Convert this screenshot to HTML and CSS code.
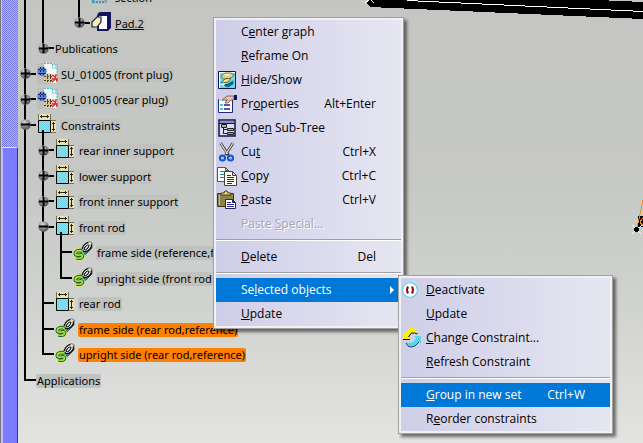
FILE: index.html
```html
<!DOCTYPE html>
<html lang="en">
<head>
<meta charset="utf-8">
<title>Specification tree</title>
<link rel="stylesheet" href="styles.css">
</head>
<body>
<svg class="defs" aria-hidden="true">
  <defs>
    <pattern id="dither" width="2" height="2" patternUnits="userSpaceOnUse"><path fill="#72d6e8" d="M0 0h2v2H0z"/><path fill="#8adfec" d="M0 0h1v1H0zM1 1h1v1H1z"/></pattern>
    <pattern id="haze" width="2" height="2" patternUnits="userSpaceOnUse"><path fill="#b4b6b4" d="M0 0h1v1H0zM1 1h1v1H1z"/></pattern>
    <radialGradient id="ball" cx=".4" cy=".3" r=".75"><stop offset="0" stop-color="#ddd"/><stop offset=".5" stop-color="#8c8c8c"/><stop offset="1" stop-color="#4c4c4c"/></radialGradient>
  </defs>
  <symbol id="plus" viewBox="0 0 11 11"><circle cx="5.5" cy="5.5" r="5.3" fill="url(#ball)"/><path d="M1 4.500h9v2H1zM4.500 1h2v9h-2z"/></symbol>
  <symbol id="minus" viewBox="0 0 11 11"><circle cx="5.5" cy="5.5" r="5.3" fill="url(#ball)"/><path d="M1 4.500h9v2H1z"/></symbol>
  <symbol id="set" viewBox="0 0 20 20">
    <path fill="#e6e2b4" d="M1 0h13v6H1zM14 6h5v13h-5z"/>
    <path fill="url(#dither)" stroke="#000" d="M1.500 6.500h12v12h-12z"/>
    <path fill="none" stroke="#77704c" d="M1.500 0v6M13.500 0v6M14 6.500h5M14 18.500h5"/>
    <path fill="none" stroke="#222" d="M3 2.500h9M4.500 1v3M10.500 1v3M16.500 8v9M15 9.500h3M15 15.500h3"/>
  </symbol>
  <symbol id="link" viewBox="0 0 20 20">
    <path fill="#23868a" stroke="#0c3438" stroke-width=".6" d="M4 10l5-3 6-6 4 1 0 5-6 6-3 2z"/>
    <ellipse cx="14" cy="6" rx="5.400" ry="3.400" transform="rotate(-45 14 6)" fill="#fff" stroke="#000" stroke-width="1.200"/>
    <ellipse cx="13.500" cy="6.500" rx="3" ry="1.300" transform="rotate(-45 13.500 6.500)" fill="none" stroke="#000" stroke-width="1"/>
    <circle cx="16.800" cy="2.600" r="1.900" fill="#ffed68" stroke="#4867c8" stroke-width=".7"/>
    <path fill="none" stroke="#e6f060" stroke-width="5" d="M9.500 10.500c-4-2-8 0-7 3 2 2 6-1 7 1 0 3-3 3-6 2.500"/>
    <path fill="none" stroke="#1f5f2c" stroke-width="3.600" d="M9.500 10.500c-4-2-8 0-7 3 2 2 6-1 7 1 0 3-3 3-6 2.500"/>
    <path fill="none" stroke="#a9dc4c" stroke-width="1.700" d="M9.500 10.500c-4-2-8 0-7 3 2 2 6-1 7 1 0 3-3 3-6 2.500"/>
  </symbol>
  <symbol id="plug" viewBox="0 0 21 22">
    <path fill="url(#haze)" d="M0 1h21v21H0z"/>
    <path fill="#f4f6f5" d="M7 1h9l4 4v16H9z"/>
    <path fill="none" stroke="#35bfc9" stroke-dasharray="2 1" d="M7 1.500h9l4 4V14M15.500 2v4h5"/>
    <circle cx="5" cy="9.500" r="4.700" fill="#5f84d4"/><path stroke="#132970" fill="none" stroke-dasharray="2 1" d="M1 7.500h8M1 11.500h8M3.500 5v9M6.500 5v9"/>
    <circle cx="11.500" cy="16.500" r="4.700" fill="#d3c3a0"/><path stroke="#4c4126" fill="none" stroke-dasharray="2 1" d="M7 14.500h9M7 18.500h9M10.500 12v9M13.500 12v9"/>
    <path stroke="#d93131" stroke-width="1.400" fill="none" d="M15 13q4 1 5 7M19 12q0 5-4 8M15 17h6"/>
  </symbol>
  <symbol id="sketch" viewBox="0 0 20 20"><path fill="url(#haze)" d="M0 2h17v16H0z"/><path fill="none" stroke="#2f9fc0" stroke-width="2" stroke-dasharray="2 1" d="M2 16h12l3-4V4H5L2 8z"/></symbol>
  <symbol id="pad" viewBox="0 0 20 20">
    <path fill="#15155f" d="M7 1l2-1h11v16l-3 3H6V4z"/><path fill="#fff" d="M8 4h8v13H8z"/>
    <path fill="#f7f0a2" stroke="#15155f" stroke-width="1.200" d="M1 14v-4l5-5h4v5l-4 5H1z"/>
  </symbol>
  <symbol id="hideshow" viewBox="0 0 20 20">
    <path fill="#67d9ee" stroke="#15154c" d="M1.500 1.500h17v17h-17z"/><path fill="none" stroke="#fff" d="M2.500 18V2.500H18"/>
    <path fill="#d9d384" stroke="#55512d" stroke-width=".7" d="M4 6l4-3h6l3 2-4 4H6z"/><path fill="#f5efb0" d="M6 5l3-1h5l-3 2z"/>
    <path fill="#f4ed7c" stroke="#333" stroke-width=".7" d="M4 13l4-4 6-1-3 4z"/><path fill="#0c7484" stroke="#093f48" stroke-width=".6" d="M6 15l5-1 5-3v3l-5 3z"/><path fill="#fff" d="M3 14l5-1-1 3z"/>
  </symbol>
  <symbol id="props" viewBox="0 0 20 20">
    <path fill="#fff" stroke="#252579" d="M1.500 5.500h14v13h-14z"/><path fill="#d6d5ca" d="M2 5h13v2H2z"/>
    <path stroke="#19b0d3" stroke-width="1.500" d="M3 11h3M3 15h3"/><path stroke="#21218a" stroke-width="1.500" d="M7 11h6M7 15h6"/>
    <path fill="#dfb69c" stroke="#72594d" stroke-width=".8" d="M5 6l5-4h7v4h-3l-3 3H8l2-3z"/><path stroke="#f5dbc8" d="M10 4h5"/><path fill="#10106d" d="M17 1h3v5h-3z"/>
  </symbol>
  <symbol id="subtree" viewBox="0 0 20 20">
    <path fill="#dcdcf4" stroke="#15154c" stroke-width="1.500" d="M2 2h16v16H2z"/><path fill="#8d8dc4" d="M3 3h14v2H3z"/><path stroke="#15154c" d="M2 5.500h16"/>
    <path fill="none" stroke="#222" d="M6.500 8v8M6.500 11.500h4M6.500 15.500h4"/><path fill="#adaec4" stroke="#222" d="M4.500 6.500h5v3h-5zM10.500 10.500h6v2h-6zM10.500 14.500h6v2h-6z"/>
  </symbol>
  <symbol id="cut" viewBox="0 0 20 20">
    <path stroke="#333" stroke-width="2.600" d="M3.500 1l8 12M16 1L8.500 13"/><path stroke="#e8e8e0" stroke-width="1.200" d="M3.500 1l7 11M16 1L9 12"/>
    <circle cx="5.500" cy="16" r="2.600" fill="#9cc4ff" stroke="#1655d0" stroke-width="2"/><circle cx="13.500" cy="16" r="2.600" fill="#9cc4ff" stroke="#1655d0" stroke-width="2"/>
  </symbol>
  <symbol id="copy" viewBox="0 0 20 20">
    <path fill="#fff" stroke="#555" d="M.5 1.500h8l3 3v11H.5zM8.500 1.500v3h3"/><path stroke="#238398" d="M3 5.500h5M3 8.500h5M3 11.500h4"/>
    <path fill="#fffff0" stroke="#444" d="M7.500 5.500h8l4 4v10h-12zM15.500 5.500v4h4"/><path stroke="#142c9c" d="M10 9.500h4M10 11.500h7M10 13.500h7M10 15.500h7M10 17.500h5"/>
  </symbol>
  <symbol id="paste" viewBox="0 0 20 20">
    <path fill="#8a8448" stroke="#36351c" d="M.5 3.500h16v13H.5z"/><path stroke="#c4c07c" d="M2.500 5v10"/><path fill="#eed65c" stroke="#433e20" d="M4 5V3h3l1-2h2l1 2h3v2z"/>
    <path fill="#fff" stroke="#272757" d="M8.500 9.500h7l3 3v6h-10zM15.500 9.500v3h3"/><path stroke="#252593" d="M10 12.500h4M10 14.500h7M10 16.500h7"/>
  </symbol>
  <symbol id="deactivate" viewBox="0 0 20 20"><circle cx="8" cy="10" r="7.400" fill="#fff" stroke="#66d6ed" stroke-width="1.200"/><path fill="none" stroke="#8c1111" stroke-width="2" d="M6 6.500q-2 3.500 0 7M10 6.500q2 3.500 0 7"/></symbol>
  <symbol id="change" viewBox="0 0 20 20">
    <path fill="#fff000" d="M1 4v7h7L6 9l3-4h3l3 1-1-4-3-2H8L5 3 3 6z"/><path fill="none" stroke="#111" d="M1 11.500h7M6.500 9l3-4h3l3 1"/>
    <path fill="#56d7ef" d="M19 8v7l-2-1-4 4-4 1-4-3-1-2 4 1 3-1 3-4-2-2z"/><path fill="none" stroke="#134c68" d="M4 15l2 3 3 1 4-1 4-4"/>
  </symbol>
</svg>

<main class="viewer">
  <svg class="scene" viewBox="0 0 643 443" preserveAspectRatio="xMinYMin slice" shape-rendering="crispEdges" aria-hidden="true">
    <path d="M367 0h231l45 2v17L370 7l-3-4z"/><path fill="none" stroke="#fff" d="M407 .500l236 11"/><path fill="none" stroke="#fff" d="M365 3l4-3M371 0l3 3"/>
    <path d="M638 216h5v11h-5z"/><path fill="none" stroke="#ed8b25" d="M643 200l-6 28M643 218l-3 4 3 4"/><path stroke="#fff" d="M632 225l9 9M632 234l10-9"/><circle cx="636.500" cy="229.500" r="2.500"/>
  </svg>
  <div class="gauge"><div class="gauge-thumb"></div></div>

  <ul class="tree" aria-label="Specification tree">
    <li class="row"><i class="guide line"></i><i class="guide line"></i><i class="guide"></i><i class="guide line"></i><svg class="icon"><use href="#sketch"/></svg><span class="label">section</span></li>
    <li class="row"><i class="guide line"></i><i class="guide line"></i><i class="guide"></i><i class="guide end"><svg class="toggle"><use href="#plus"/></svg></i><svg class="icon"><use href="#pad"/></svg><span class="label current">Pad.2</span></li>
    <li class="row"><i class="guide line"></i><i class="guide end"><svg class="toggle"><use href="#plus"/></svg></i><span class="label">Publications</span></li>
    <li class="row"><i class="guide tee"><svg class="toggle"><use href="#plus"/></svg></i><svg class="icon large"><use href="#plug"/></svg><span class="label">SU_01005 (front plug)</span></li>
    <li class="row"><i class="guide tee"><svg class="toggle"><use href="#plus"/></svg></i><svg class="icon large"><use href="#plug"/></svg><span class="label">SU_01005 (rear plug)</span></li>
    <li class="row open"><i class="guide tee"><svg class="toggle"><use href="#minus"/></svg></i><svg class="icon"><use href="#set"/></svg><span class="label">Constraints</span></li>
    <li class="row"><i class="guide line"></i><i class="guide tee"><svg class="toggle"><use href="#plus"/></svg></i><svg class="icon"><use href="#set"/></svg><span class="label">rear inner support</span></li>
    <li class="row"><i class="guide line"></i><i class="guide tee"><svg class="toggle"><use href="#plus"/></svg></i><svg class="icon"><use href="#set"/></svg><span class="label">lower support</span></li>
    <li class="row"><i class="guide line"></i><i class="guide tee"><svg class="toggle"><use href="#plus"/></svg></i><svg class="icon"><use href="#set"/></svg><span class="label">front inner support</span></li>
    <li class="row open"><i class="guide line"></i><i class="guide tee"><svg class="toggle"><use href="#minus"/></svg></i><svg class="icon"><use href="#set"/></svg><span class="label">front rod</span></li>
    <li class="row"><i class="guide line"></i><i class="guide line"></i><i class="guide tee"></i><svg class="icon"><use href="#link"/></svg><span class="label">frame side (reference,fr</span></li>
    <li class="row"><i class="guide line"></i><i class="guide line"></i><i class="guide end"></i><svg class="icon"><use href="#link"/></svg><span class="label">upright side (front rod</span></li>
    <li class="row"><i class="guide line"></i><i class="guide tee"></i><svg class="icon"><use href="#set"/></svg><span class="label">rear rod</span></li>
    <li class="row"><i class="guide line"></i><i class="guide tee"></i><svg class="icon"><use href="#link"/></svg><span class="label picked">frame side (rear rod,reference)</span></li>
    <li class="row"><i class="guide line"></i><i class="guide end"></i><svg class="icon"><use href="#link"/></svg><span class="label picked">upright side (rear rod,reference)</span></li>
    <li class="row"><i class="guide end"></i><span class="label">Applications</span></li>
  </ul>

  <ul class="menu context">
    <li><button class="item"><span class="text">C<u>e</u>nter graph</span></button></li>
    <li><button class="item"><span class="text"><u>R</u>eframe On</span></button></li>
    <li><button class="item"><svg class="glyph"><use href="#hideshow"/></svg><span class="text"><u>H</u>ide/Show</span></button></li>
    <li><button class="item"><svg class="glyph"><use href="#props"/></svg><span class="text">Pr<u>o</u>perties</span><kbd>Alt+Enter</kbd></button></li>
    <li><button class="item"><svg class="glyph"><use href="#subtree"/></svg><span class="text">Ope<u>n</u> Sub-Tree</span></button></li>
    <li><button class="item"><svg class="glyph"><use href="#cut"/></svg><span class="text">Cu<u>t</u></span><kbd>Ctrl+X</kbd></button></li>
    <li><button class="item"><svg class="glyph"><use href="#copy"/></svg><span class="text"><u>C</u>opy</span><kbd>Ctrl+C</kbd></button></li>
    <li><button class="item"><svg class="glyph"><use href="#paste"/></svg><span class="text"><u>P</u>aste</span><kbd>Ctrl+V</kbd></button></li>
    <li><button class="item" disabled><span class="text">Paste <u>S</u>pecial...</span></button></li>
    <li class="rule"></li>
    <li><button class="item"><span class="text"><u>D</u>elete</span><kbd>Del</kbd></button></li>
    <li class="rule"></li>
    <li class="parent"><button class="item active"><span class="text">Se<u>l</u>ected objects</span><i class="arrow"></i></button>
      <ul class="menu submenu">
        <li><button class="item"><svg class="glyph"><use href="#deactivate"/></svg><span class="text"><u>D</u>eactivate</span></button></li>
        <li><button class="item"><span class="text"><u>U</u>pdate</span></button></li>
        <li><button class="item"><svg class="glyph"><use href="#change"/></svg><span class="text"><u>C</u>hange Constraint...</span></button></li>
        <li><button class="item"><span class="text"><u>R</u>efresh Constraint</span></button></li>
        <li class="rule"></li>
        <li><button class="item active"><span class="text"><u>G</u>roup in new set</span><kbd>Ctrl+W</kbd></button></li>
        <li><button class="item"><span class="text">R<u>e</u>order constraints</span></button></li>
      </ul>
    </li>
    <li><button class="item"><span class="text"><u>U</u>pdate</span></button></li>
  </ul>
</main>
</body>
</html>
```
FILE: styles.css
```css
* { box-sizing: border-box; }
body { margin: 0; }
ul { list-style: none; margin: 0; padding: 0; }
.defs { position: absolute; width: 0; height: 0; }

.viewer {
  position: relative;
  display: flex;
  min-height: 100vh;
  overflow: hidden;
  background: linear-gradient(#c5c6c4 0%, #c6c8c5 40%, #d1d3d0 70%, #e3e4e2 100%);
  font: 11px/14px "Noto Sans", "Open Sans", sans-serif;
  color: #000;
}
.scene { position: absolute; inset: 0; width: 100%; height: 100%; }

.gauge {
  position: relative;
  flex: none;
  width: 18px;
  padding-top: 147px;
  display: flex;
  border-left: 1px solid #777;
  background: repeating-conic-gradient(#7b7be8 0 25%, #b4b4d6 0 50%) 0 0 / 2px 2px;
  box-shadow: inset 1px 0 #c8c8c8;
}
.gauge-thumb {
  flex: 1;
  margin-left: 1px;
  background: #7b7bff;
  border-top: 1px solid #e4e4ff;
  border-left: 1px solid #b9b9ff;
  border-right: 1px solid #34348c;
}

/* Tree rows alternate 26px and 25px */
.tree { position: relative; margin: -15px 0 0 -2px; }
.row { display: flex; align-items: center; height: 26px; white-space: nowrap; }
.row:nth-child(even) { height: 25px; }
.guide { position: relative; flex: none; width: 18px; height: 100%; display: grid; place-items: center; }
.line, .tee { background: linear-gradient(#000, #000) 8px 0 / 2px 100% no-repeat; }
.end { background: linear-gradient(#000, #000) 8px 0 / 2px 50% no-repeat; }
.tee::before, .end::before {
  content: "";
  position: absolute;
  left: 8px;
  right: -2px;
  top: 11px;
  height: 2px;
  background: #000;
}
.toggle { position: relative; width: 11px; height: 11px; margin-bottom: 2px; }
.icon { flex: none; width: 20px; height: 20px; margin: 0 1px 4px 3px; }
.large { width: 21px; height: 22px; margin-right: 0; }
.open { position: relative; }
.open .label::before {
  content: "";
  position: absolute;
  left: 26px;
  bottom: 0;
  width: 2px;
  height: 8px;
  background: #000;
}
.open .line ~ .label::before { left: 44px; }
.label { margin-left: 2px; padding: 0 1px; border-radius: 2px; background: #c0c2bf; }
.current { text-decoration: underline; text-decoration-skip-ink: none; }
.picked { background: #ff8000; }

.menu {
  position: absolute;
  padding: 2px;
  border: 1px solid #a0a0a0;
  background: linear-gradient(90deg, #cfcee8, #e6e6f2) content-box, #f1f1f3;
  box-shadow: 3px 3px 3px #00000085;
  font: 12px/16px "Open Sans", "Noto Sans", sans-serif;
}
.context { left: 213px; top: 17px; width: 191px; }
.submenu { left: 182px; top: -3px; width: 215px; }
.parent { position: relative; }
.item {
  position: relative;
  display: flex;
  align-items: center;
  justify-content: space-between;
  width: 100%;
  height: 24px;
  padding: 0 25px;
  border: 0;
  background: none;
  color: #000;
  font: inherit;
  white-space: nowrap;
}
.item kbd { font: inherit; }
.item:disabled { color: #a5a5b2; text-shadow: 1px 1px #fff; }
.active { background: #0078d7; color: #fff; }
.glyph { position: absolute; left: 1px; top: 2px; width: 20px; height: 20px; }
.rule { height: 9px; padding-top: 3px; }
.rule::before { content: ""; display: block; height: 2px; background: linear-gradient(#a0a0a0 50%, #fff 50%); }
.arrow {
  position: absolute;
  right: 7px;
  border: 4px solid transparent;
  border-left-color: #fff;
  border-right: 0;
}
```
